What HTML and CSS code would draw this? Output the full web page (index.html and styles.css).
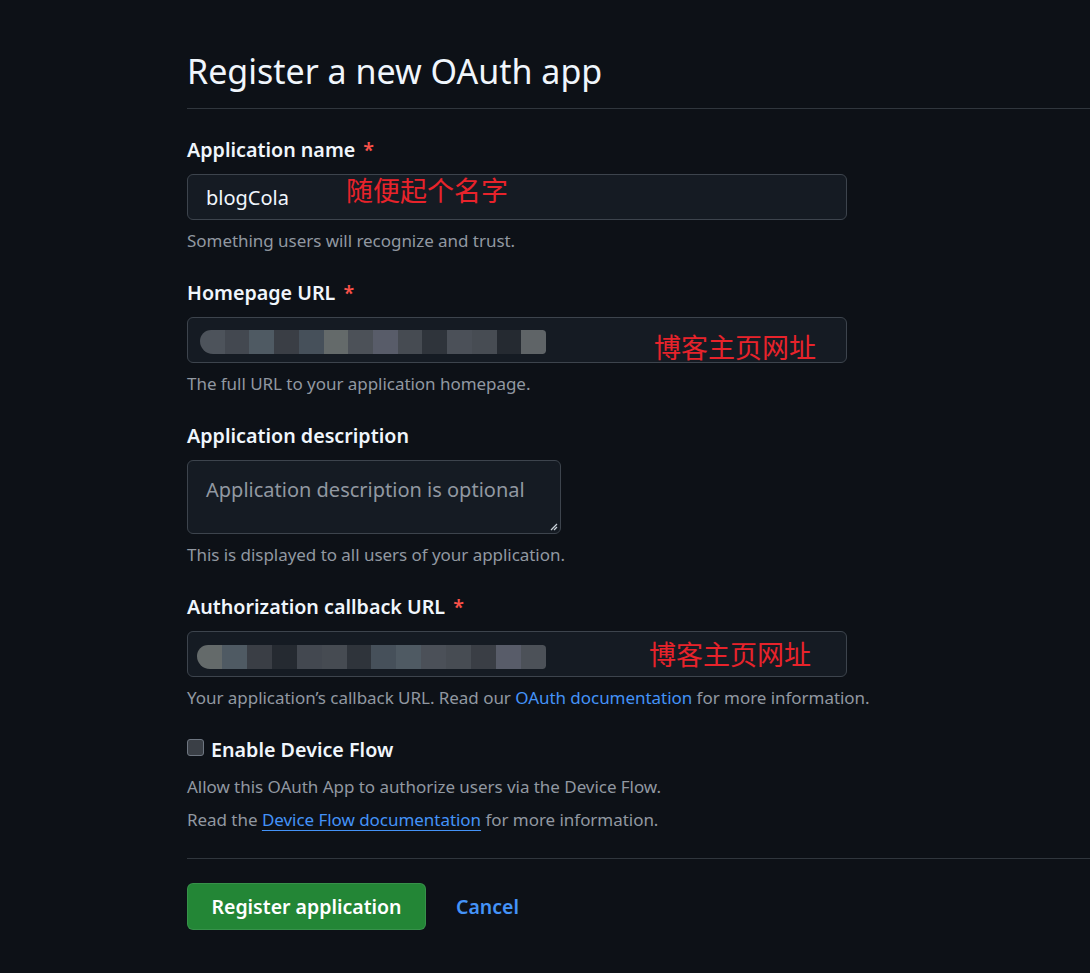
FILE: index.html
```html
<!DOCTYPE html>
<html lang="en">
<head>
<meta charset="utf-8">
<title>Register a new OAuth app</title>
<link rel="stylesheet" href="styles.css">
</head>
<body>
<div class="page">
  <h1 class="title">Register a new OAuth app</h1>
  <form class="form">
    <div class="group">
      <label class="label">Application name <span class="req">*</span></label>
      <div class="input">
        <span class="value">blogCola</span>
        <span class="note-cn note-cn-1">随便起个名字</span>
      </div>
      <p class="note">Something users will recognize and trust.</p>
    </div>
    <div class="group">
      <label class="label">Homepage URL <span class="req">*</span></label>
      <div class="input">
        <div class="blur blur-a">
          <i class="c1"></i><i class="c2"></i><i class="c3"></i><i class="c4"></i><i class="c5"></i><i class="c6"></i><i class="c7"></i><i class="c8"></i><i class="c9"></i><i class="c10"></i><i class="c11"></i><i class="c12"></i><i class="c13"></i><i class="c14"></i>
        </div>
        <span class="note-cn note-cn-2">博客主页网址</span>
      </div>
      <p class="note">The full URL to your application homepage.</p>
    </div>
    <div class="group">
      <label class="label">Application description</label>
      <div class="textarea">
        <span class="placeholder">Application description is optional</span>
        <svg class="grip" width="10" height="10" viewBox="0 0 10 10"><path d="M9 3 L3 9 M9 6 L6 9" stroke="#c9d1d9" stroke-width="1.3" fill="none"/></svg>
      </div>
      <p class="note">This is displayed to all users of your application.</p>
    </div>
    <div class="group group-last">
      <label class="label">Authorization callback URL <span class="req">*</span></label>
      <div class="input">
        <div class="blur blur-b">
          <i class="c6"></i><i class="c3"></i><i class="c4"></i><i class="c13"></i><i class="c2"></i><i class="c9"></i><i class="c10"></i><i class="c5"></i><i class="c3"></i><i class="c11"></i><i class="c12"></i><i class="c4"></i><i class="c8"></i><i class="c7"></i>
        </div>
        <span class="note-cn note-cn-3">博客主页网址</span>
      </div>
      <p class="note">Your application’s callback URL. Read our <a class="link" href="#">OAuth documentation</a> for more information.</p>
    </div>
    <div class="device">
      <label class="check-row"><span class="checkbox"></span><span class="check-label">Enable Device Flow</span></label>
      <p class="note note-dev">Allow this OAuth App to authorize users via the Device Flow.</p>
      <p class="note note-dev2">Read the <a class="link link-u" href="#">Device Flow documentation</a> for more information.</p>
    </div>
    <div class="actions">
      <button type="button" class="btn">Register application</button>
      <a class="cancel" href="#">Cancel</a>
    </div>
  </form>
</div>
</body>
</html>
```

FILE: styles.css
```css
html, body {
  margin: 0;
  background: #0d1117;
  overflow: hidden;
}
body {
  font-family: "Noto Sans", "Open Sans", "Noto Sans CJK SC", sans-serif;
  color: #f0f6fc;
  width: 1090px;
  height: 973px;
}
.page {
  padding: 48px 0 0 187px;
}
.title {
  margin: 0;
  font-size: 34px;
  font-weight: 400;
  line-height: 46px;
  padding-bottom: 14px;
  border-bottom: 1px solid #30363d;
}
.form {
  padding-top: 30px;
}
.group {
  margin-bottom: 30px;
}
.group-last {
  margin-bottom: 28px;
}
.label {
  display: flex;
  gap: 8px;
  font-size: 19.7px;
  font-weight: 600;
  line-height: 22px;
  margin-bottom: 13px;
}
.req {
  color: #f85149;
}
.input {
  position: relative;
  width: 660px;
  height: 46px;
  box-sizing: border-box;
  border: 1px solid #3d444d;
  border-radius: 6px;
  background: #151b23;
  display: flex;
  align-items: center;
  padding: 0 18px;
}
.value {
  font-size: 20px;
  color: #f0f6fc;
}
.note-cn {
  position: absolute;
  font-family: "Noto Sans CJK SC", sans-serif;
  color: #e8232b;
  font-size: 27px;
  line-height: 30px;
  font-weight: 400;
}
.note-cn-1 { left: 158px; top: 0px; }
.note-cn-2 { left: 466px; top: 14px; }
.note-cn-3 { left: 461px; top: 7px; }
.note {
  margin: 10px 0 0;
  font-size: 17px;
  line-height: 22px;
  color: #9198a1;
  letter-spacing: -0.04px;
}
.link {
  color: #4493f8;
  text-decoration: none;
}
.link-u {
  text-decoration: underline;
  text-underline-offset: 4px;
  text-decoration-thickness: 1px;
}
.blur {
  position: absolute;
  display: flex;
  height: 24px;
  border-radius: 12px 4px 4px 14px;
  overflow: hidden;
  filter: blur(0.6px);
}
.blur i { flex: 1; display: block; }
.blur-a { left: 12px; top: 12px; width: 346px; }
.blur-b { left: 9px; top: 13px; width: 349px; }
.c1 { background: #4d535b; }
.c2 { background: #434850; }
.c3 { background: #4f5a63; }
.c4 { background: #3a3e45; }
.c5 { background: #46505a; }
.c6 { background: #646a6a; }
.c7 { background: #4c5158; }
.c8 { background: #585c69; }
.c9 { background: #464b52; }
.c10 { background: #2f343b; }
.c11 { background: #4b5058; }
.c12 { background: #474c53; }
.c13 { background: #252a31; }
.c14 { background: #5f6467; }
.textarea {
  position: relative;
  width: 374px;
  height: 74px;
  box-sizing: border-box;
  border: 1px solid #3d444d;
  border-radius: 6px;
  background: #151b23;
  padding: 16px 18px;
}
.placeholder {
  font-size: 20px;
  line-height: 26px;
  color: #9198a1;
}
.grip {
  position: absolute;
  right: 2px;
  bottom: 2px;
}
.check-row {
  display: flex;
  align-items: center;
  gap: 7px;
  height: 24px;
}
.checkbox {
  width: 17px;
  height: 17px;
  box-sizing: border-box;
  border: 1px solid #6e7681;
  border-radius: 3px;
  background: #3a3f46;
  margin-top: -4px;
}
.check-label {
  font-size: 19.7px;
  font-weight: 600;
}
.note-dev { margin-top: 15px; }
.note-dev2 { margin-top: 11px; }
.actions {
  margin-top: 27px;
  border-top: 1px solid #30363d;
  padding-top: 24px;
  display: flex;
  align-items: center;
  gap: 30px;
}
.btn {
  font-family: inherit;
  width: 239px;
  height: 47px;
  border: 1px solid rgba(240,246,252,0.1);
  border-radius: 6px;
  background: #238636;
  color: #ffffff;
  font-size: 19.5px;
  font-weight: 600;
  cursor: pointer;
}
.cancel {
  color: #4493f8;
  font-size: 19.5px;
  font-weight: 600;
  text-decoration: none;
}
```
